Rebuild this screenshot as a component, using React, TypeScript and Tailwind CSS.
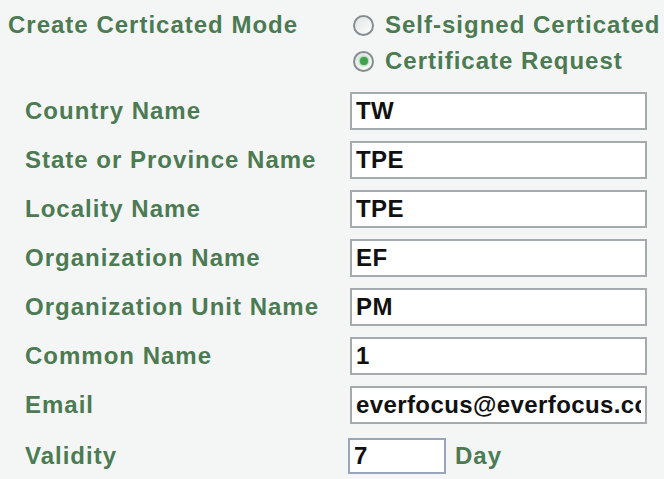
import { useState } from 'react';

const font = { fontFamily: '"Liberation Sans", Arial, sans-serif' };

type Field = { label: string; value: string };

const fields: Field[] = [
  { label: 'Country Name', value: 'TW' },
  { label: 'State or Province Name', value: 'TPE' },
  { label: 'Locality Name', value: 'TPE' },
  { label: 'Organization Name', value: 'EF' },
  { label: 'Organization Unit Name', value: 'PM' },
  { label: 'Common Name', value: '1' },
  { label: 'Email', value: 'everfocus@everfocus.com' },
];

function Radio({ checked, label, onClick }: { checked: boolean; label: string; onClick: () => void }) {
  return (
    <button type="button" onClick={onClick} className="flex items-center h-[36px]">
      <span className="w-[21px] h-[21px] rounded-full border-2 border-[#858d8e] bg-gradient-to-br from-[#dfe4e4] to-white flex items-center justify-center">
        {checked && <span className="w-[8px] h-[8px] rounded-full bg-[#3fa34d] shadow-[0_0_3px_#3fa34d]" />}
      </span>
      <span className="ml-[11px] text-[24px] font-bold tracking-[1px] text-[#4c7a52]">{label}</span>
    </button>
  );
}

export default function App() {
  const [mode, setMode] = useState<'self' | 'request'>('request');
  const [values, setValues] = useState<string[]>(fields.map((f) => f.value));
  const [validity, setValidity] = useState('7');

  return (
    <div style={font} className="w-[664px] h-[479px] bg-[#f4f6f6] overflow-hidden">
      {/* mode */}
      <div className="flex pt-[7px]">
        <div className="w-[353px] pl-[8px] text-[24px] font-bold tracking-[1px] text-[#4c7a52] leading-[36px]">
          Create Certicated Mode
        </div>
        <div className="flex flex-col">
          <Radio checked={mode === 'self'} label="Self-signed Certicated" onClick={() => setMode('self')} />
          <Radio checked={mode === 'request'} label="Certificate Request" onClick={() => setMode('request')} />
        </div>
      </div>

      {/* fields */}
      <div className="flex flex-col gap-[11px] mt-[13px]">
        {fields.map((f, i) => (
          <div key={f.label} className="flex items-center h-[38px]">
            <div className="w-[350px] pl-[25px] text-[24px] font-bold tracking-[1px] text-[#4c7a52]">
              {f.label}
            </div>
            <input
              value={values[i]}
              onChange={(e) => setValues(values.map((v, j) => (j === i ? e.target.value : v)))}
              style={font}
              className="w-[297px] h-[38px] border-2 border-[#a3abad] bg-white px-[4px] text-[24px] font-bold tracking-[0.4px] text-[#111] outline-none"
            />
          </div>
        ))}
        <div className="flex items-center h-[38px] mt-[2px]">
          <div className="w-[348px] pl-[25px] text-[24px] font-bold tracking-[1px] text-[#4c7a52]">Validity</div>
          <input
            value={validity}
            onChange={(e) => setValidity(e.target.value)}
            style={font}
            className="w-[98px] h-[36px] border-2 border-[#97a6bb] bg-white px-[4px] text-[24px] font-bold text-[#111] outline-none"
          />
          <span className="ml-[9px] text-[24px] font-bold tracking-[1px] text-[#4c7a52]">Day</span>
        </div>
      </div>
    </div>
  );
}
